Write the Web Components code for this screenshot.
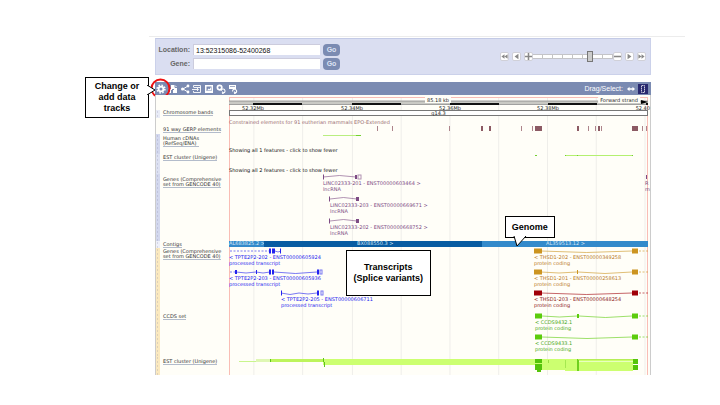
<!DOCTYPE html>
<html lang="en">
<head>
<meta charset="utf-8">
<title>Region in detail</title>
<style>
  body { margin: 0; background: #fff; color: #222; font-family: "Liberation Sans", Arial, sans-serif; }
</style>
</head>
<body>
<region-page></region-page>
<script>
class Base extends HTMLElement {
  constructor() { super(); this.attachShadow({ mode: 'open' }); }
  connectedCallback() { this.shadowRoot.innerHTML = this.render(); }
}
const SPAN = 419;
const pct = x => `${(x / SPAN * 100).toFixed(2)}%`;

/* Boxed note with an optional tail: "right" or "down" */
class CallOut extends Base {
  render() {
    const tail = {
      right: '<svg class="right" width="9" height="10"><path d="M0 0L8 5L0 10" fill="#fff" stroke="#000"/></svg>',
      down: '<svg class="down" width="14" height="11"><path d="M1 0L4 10L13 0" fill="#fff" stroke="#000"/></svg>'
    }[this.getAttribute('tail')] || '';
    return `<style>
      :host { position: absolute; display: flex; align-items: center; justify-content: center; box-sizing: border-box;
        background: #fff; border: 1px solid #000; color: #000; font: bold 9px/11px "Liberation Sans", Arial, sans-serif; text-align: center; z-index: 3; }
      svg { position: absolute; }
      .right { left: 100%; top: 7px; margin-left: -1px; }
      .down { left: 7px; top: 100%; margin-top: -1px; }
    </style><slot></slot>${tail}`;
  }
}
customElements.define('call-out', CallOut);

/* Location and gene search with zoom controls */
class LocationNav extends Base {
  render() {
    const btn = (label, d) => `<button class="step" aria-label="${label}"><svg viewBox="0 0 9 9"><path d="${d}"/></svg></button>`;
    return `<style>
      :host { display: flex; align-items: center; justify-content: space-between; box-sizing: border-box; height: 37px; padding: 0 4px 0 5px;
        background: #dadef1; border: 1px solid #cbd1ea; border-top-color: #c3cae6; }
      form { display: grid; grid-template-columns: 29px 127px 17px; column-gap: 3px; row-gap: 2px; align-items: center; }
      label { font: bold 7px/12px "Liberation Sans", Arial, sans-serif; color: #666; text-align: right; white-space: nowrap; justify-self: end; }
      input[type=text] { width: 100%; height: 11px; box-sizing: border-box; border: 1px solid #ccd; border-width: 1px 0 0 1px; padding: 0 2px; background: #fff; color: #111;
        font: 7px/10px "Liberation Sans", Arial, sans-serif; }
      .go { height: 12px; padding: 0; border: 0; border-radius: 4px; background: #7b8bb2; color: #dde3f4; font: bold 7px/12px "Liberation Sans", Arial, sans-serif; }
      .zoom { display: flex; align-items: center; }
      .step { width: 9px; height: 9px; padding: 0; border: 1px solid #d0d0d8; border-radius: 2px; background: #fff; display: block; }
      .step svg { display: block; width: 7px; height: 7px; }
      .step path { fill: #888; stroke: none; }
      .step + .step { margin-left: 3px; }
      input[type=range] { -webkit-appearance: none; appearance: none; width: 80px; height: 11px; margin: 0;
        background: linear-gradient(#c4c4c8,#c4c4c8) 0 3px/100% 1px no-repeat, linear-gradient(#c4c4c8,#c4c4c8) 0 7px/100% 1px no-repeat,
          repeating-linear-gradient(90deg,#fff 0 9px,#c4c4c4 9px 10px) 0 3px/100% 5px no-repeat; }
      input[type=range]::-webkit-slider-thumb { -webkit-appearance: none; width: 6px; height: 11px; background: #ccc; border: 1px solid #777; box-sizing: border-box; }
    </style>
    <form>
      <label for="loc">Location:</label><input id="loc" type="text" value="13:52315086-52400268"><button class="go" type="button">Go</button>
      <label for="gene">Gene:</label><input id="gene" type="text"><button class="go" type="button">Go</button>
    </form>
    <div class="zoom">
      ${btn('Far left', 'M4.5 1.5V7.5L.5 4.5ZM8.5 1.5V7.5L4.5 4.5Z')}${btn('Left', 'M7 1V8L2 4.5Z')}
      ${btn('Zoom in', 'M3.5 0H5.5V3.5H9V5.5H5.5V9H3.5V5.5H0V3.5H3.5Z')}
      <input type="range" aria-label="Zoom level" min="0" max="100" value="73">
      ${btn('Zoom out', 'M0 3.5H9V5.5H0Z')}${btn('Right', 'M2 1V8L7 4.5Z')}${btn('Far right', 'M.5 1.5V7.5L4.5 4.5ZM4.5 1.5V7.5L8.5 4.5Z')}
    </div>`;
  }
}
customElements.define('location-nav', LocationNav);

/* Icon strip above the image */
class ImageToolbar extends Base {
  render() {
    const icons = [
      ['Configure tracks', '<g fill="none" stroke="#fff"><circle cx="5" cy="5" r="2.4" stroke-width="1.8"/><circle cx="5" cy="5" r="3.9" stroke-width="1.5" stroke-dasharray="1.6 1.46"/></g>'],
      ['Add custom tracks', '<path fill="#fff" d="M3 1H7L9 3V9H5V6H3Z"/><path fill="#fff" d="M1 6H2V5H3V9H1Z"/><path stroke="#7b8bb2" d="M4 5.5H6M7 1V3.5H9" fill="none"/>'],
      ['Share', '<path d="M8 2L3 5L8 8" fill="none" stroke="#fff"/><circle cx="8" cy="2" r="1.4" fill="#fff"/><circle cx="2.6" cy="5" r="1.6" fill="#fff"/><circle cx="8" cy="8" r="1.4" fill="#fff"/>'],
      ['Resize image', '<path d="M1.5 3V1.5H8.5V8.5H1.5V7M1.5 3.5H8.5M0 5.5H6M5 4L6.5 5.5L5 7" fill="none" stroke="#fff" stroke-width=".9"/>'],
      ['Export image', '<path fill="#fff" d="M1 1H9V9H1Z"/><path d="M2.5 2.5H7.5V7H2.5Z" fill="#7b8bb2"/><path d="M3 6.5L4.6 4.5L5.6 5.3L7 3V6.5Z" fill="#fff"/>'],
      ['Reset configuration', '<circle cx="3.6" cy="3.6" r="2.2" fill="none" stroke="#fff" stroke-width="1.7"/><path d="M5 7A2 2 0 1 1 7.5 9M7.5 9L6 7.8M7.5 9L6.2 10" fill="none" stroke="#fff" stroke-width="1.1"/>'],
      ['Reset track order', '<path fill="#fff" d="M1 1H8V5H1Z"/><path d="M2 2.5H7" stroke="#7b8bb2" stroke-width=".7"/><path d="M4.6 7.5A2 2 0 1 1 7.5 9M7.5 9L6 7.8M7.5 9L6.2 10" fill="none" stroke="#fff" stroke-width="1.1"/>']
    ];
    return `<style>
      :host { display: flex; align-items: center; box-sizing: border-box; height: 13px; padding: 0 3px 0 1px; background: #7b8bb2; color: #fff; position: relative; }
      button { padding: 0; border: 0; background: none; width: 10px; height: 10px; margin-right: 2px; display: block; }
      button svg { display: block; width: 10px; height: 10px; }
      .drag { margin-left: auto; margin-right: 1px; font: 7px/13px "Liberation Sans", Arial, sans-serif; }
      .drag ~ button { margin: 0 0 0 2px; }
      .ring { position: absolute; left: -5px; top: -4px; }
    </style>
    ${icons.map(([n, s]) => `<button aria-label="${n}"><svg viewBox="0 0 10 10">${s}</svg></button>`).join('')}
    <span class="drag">Drag/Select:</span>
    <button aria-label="Drag"><svg viewBox="0 0 10 10"><path d="M1 5L3.5 2.8V4.2H6.5V2.8L9 5L6.5 7.2V5.8H3.5V7.2Z" fill="#fff"/></svg></button>
    <button aria-label="Select"><svg viewBox="0 0 10 10"><path d="M0 0H10V10H0Z" fill="#29296e"/><rect x="3.5" y="1.5" width="3" height="7" fill="none" stroke="#ccd" stroke-dasharray="1.5 .5"/></svg></button>
    <svg class="ring" width="22" height="22"><circle cx="10.5" cy="10.5" r="9" fill="none" stroke="#ed1111" stroke-width="2"/></svg>`;
  }
}
customElements.define('image-toolbar', ImageToolbar);

/* Track row: drag handle, linked name, data area */
class TrackRow extends Base {
  render() {
    const a = n => this.getAttribute(n);
    const name = (a('name') || '').split('|').filter(Boolean);
    return `<style>
      :host { display: grid; grid-template-columns: 4px 69px minmax(0, 1fr); min-height: ${a('height')}px; font: 5px/6px "DejaVu Sans", sans-serif; color: #222; }
      .handle { background: ${a('handle') || 'transparent'};
        background-image: radial-gradient(rgba(120,120,160,.22) 25%, transparent 30%); background-size: 3px 4px; }
      .handle.none { background: none; }
      .name { padding: ${a('offset') || 0}px 0 0 3px; }
      a { display: block; width: max-content; color: #333; text-decoration: none; line-height: 5px; white-space: nowrap; }
      a span { display: block; }
      a span:last-child { border-bottom: 1px solid #b3bccb; }
      .data { position: relative; }
    </style>
    <div class="handle ${a('handle') ? '' : 'none'}"></div>
    <div class="name">${name.length ? `<a href="#">${name.map(n => `<span>${n}</span>`).join('')}</a>` : ''}</div>
    <div class="data"><slot></slot></div>`;
  }
}
customElements.define('track-row', TrackRow);

/* Text pinned to a genomic position */
class FeatureLabel extends Base {
  render() {
    return `<style>
      :host { position: absolute; left: ${pct(+this.getAttribute('x'))}; white-space: nowrap; }
    </style><slot></slot>`;
  }
}
customElements.define('feature-label', FeatureLabel);

/* Gene model: exons "x:w:h", open boxes "x:w", introns "x1:x2:bend", dashed run "x1:x2".
   With the "over" attribute it shares the lane that it sits in. */
class GeneLane extends Base {
  render() {
    const list = n => (this.getAttribute(n) || '').split(' ').filter(Boolean).map(s => s.split(':').map(Number));
    const shapes = [
      ...list('introns').map(([p, q, b]) => `<polyline class="thin" points="${p},3 ${(p + q) / 2},${3 + b} ${q},3"/>`),
      ...list('dashes').map(([p, q]) => `<path class="thin" stroke-dasharray="2 1.5" d="M${p} 3H${q}"/>`),
      ...list('exons').map(([x, w, h]) => `<rect x="${x}" y="${3 - h / 2}" width="${w}" height="${h}" fill="currentColor"/>`),
      ...list('open').map(([x, w]) => `<rect class="thin" x="${x}" y="1" width="${w}" height="4"/>`)
    ].join('');
    return `<style>
      :host { display: block; position: relative; min-height: ${this.getAttribute('pitch') || 21}px; color: ${this.getAttribute('color')}; }
      :host([over]) { position: absolute; inset: 0; }
      svg { display: block; width: 100%; height: 6px; overflow: visible; }
      .thin { fill: none; stroke: currentColor; stroke-width: 1; opacity: .6; }
    </style><svg viewBox="0 0 ${SPAN} 6" preserveAspectRatio="none">${shapes}</svg><slot></slot>`;
  }
}
customElements.define('gene-lane', GeneLane);

/* Contig segments */
class ContigBar extends Base {
  render() {
    return `<style>
      :host { display: flex; height: 6px; color: #d4e6f5; font: 5px/5px "DejaVu Sans", sans-serif; }
      div { white-space: nowrap; min-width: 0; background: #338acb; }
      .a { flex: 35; } .b { flex: 218; background: #085ca2; padding-left: 93px; } .c { flex: 166; padding-left: 64px; }
      div { box-sizing: border-box; flex-basis: 0; }
      .a { flex: 0 0 ${pct(35)}; } .b { flex: 0 0 ${pct(218)}; } .c { flex: 0 0 ${pct(166)}; }
    </style><div class="a">AL683825.2 &gt;</div><div class="b">BX088550.3 &gt;</div><div class="c">AL359513.12 &gt;</div>`;
  }
}
customElements.define('contig-bar', ContigBar);

/* Scale bar with ticks every 10 kb */
class ScaleRuler extends Base {
  render() {
    const seg = [[24, 49], [123, 49], [221, 49], [319, 49], [417, 2]];
    const ticks = [[24, '52.32Mb'], [123, '52.34Mb'], [221, '52.36Mb'], [319, '52.38Mb']];
    return `<style>
      :host { display: block; position: relative; height: 15px; }
      svg { display: block; width: 100%; height: 15px; }
      span { position: absolute; top: 10px; transform: translateX(-50%); white-space: nowrap; line-height: 6px; }
      .last { right: -2px; transform: none; }
      .size, .strand { top: 2px; background: #fffef8; padding: 0 2px; }
      .arrow { position: absolute; right: 0; top: 5px; width: 7px; height: 4px; }
    </style>
    <svg viewBox="0 0 ${SPAN} 15" preserveAspectRatio="none">
      <rect y="6" width="419" height="3" fill="#c9c9c4"/><path d="M0 6H419M0 9.5H419" stroke="#888" stroke-width=".8"/>
      ${seg.map(([x, w]) => `<rect x="${x}" y="8" width="${w}" height="2" fill="#111"/>`).join('')}
    </svg>
    ${ticks.map(([x, t]) => `<span style="left:${pct(x)}">${t}</span>`).join('')}
    <span class="last">52.40</span>
    <span class="size" style="left:${pct(209)}">85.18 kb</span>
    <span class="strand" style="left:${pct(390)}">Forward strand</span>
    <svg class="arrow" viewBox="0 0 7 4"><path d="M0 0L7 2L0 4Z"/></svg>`;
  }
}
customElements.define('scale-ruler', ScaleRuler);

/* Small marks; shapes given as "x:y:w:h:color" */
class MarkStrip extends Base {
  render() {
    const h = this.getAttribute('height');
    return `<style>:host { display: block; } svg { display: block; width: 100%; height: ${h}px; }</style>
    <svg viewBox="0 0 ${SPAN} ${h}" preserveAspectRatio="none">${this.getAttribute('marks').trim().split(/\s+/).map(s => {
      const [x, y, w, t, c] = s.split(':');
      return `<rect x="${x}" y="${y}" width="${w}" height="${t}" fill="${c}"/>`;
    }).join('')}</svg>`;
  }
}
customElements.define('mark-strip', MarkStrip);

class GenomeImage extends Base {
  render() {
    const gerp = [[148,1],[163,1],[220,1],[252,2],[260,2],[292,1],[303,1],[306,7],[348,2],[359,1],[366,1],[369,2],[372,1],[403,6],[413,1],[417,1]]
      .map(([x, w]) => `${x}:0:${w}:5:${w > 1 ? '#8c5a64' : '#ad848b'}`).join(' ');
    const blue = '#2222ee', plum = '#7d4b84', gold = '#cc9420', goldText = '#b8791f', red = '#a00008', redText = '#8b1a1a', green = '#5ccc0c', greenText = '#48a820';
    const est = [
      '10:5:17:1:#c9f58d', '27:3:14:3:#dff7b4', '41:3:53:3:#bdf45c', '41:3:1:3:#5fc51c', '94:3:212:6:#ccff70', '94:2:1:4:#5fc51c', '95:6:1:5:#5fc51c',
      '306:3:30:6:#ccff70', '336:3:68:12:#ccff70', '313:9:23:5:#ccff70', '349:5:55:1:#e8ffc0', '306:3:7:4:#54c40a', '306:8:7:6:#54c40a', '308:14:4:2:#54c40a',
      '319:4:1:3:#9be040', '336:4:1:8:#a5e850', '348:3:2:12:#6ed020', '349:3:55:1:#b6ee58', '404:3:5:5:#54c40a', '404:9:5:5:#54c40a'
    ].join(' ');
    const lnc = (x, name, shape, extra = '') => `<gene-lane pitch="22" color="${plum}" ${shape}>
      <feature-label x="${x}">${name} &gt;<br>lncRNA</feature-label>${extra}</gene-lane>`;
    const thsd = (c, t, name, mid) => `<gene-lane over color="${c}" exons="305:8:5 403:6:5${mid ? ' 348:1:4' : ''}"
      introns="${mid ? '312:348:1 349:403:1.5' : '312:403:1.5'}" dashes="410:419"><feature-label x="305" style="color:${t}">&lt; ${name}<br>protein coding</feature-label></gene-lane>`;
    const tpte = (x, name, shape, over) => `<gene-lane color="${blue}" ${shape}>
      <feature-label x="${x}">&lt; ${name}<br>processed transcript</feature-label>${over}</gene-lane>`;
    const ccds = (name, shape) => `<gene-lane color="${green}" ${shape} dashes="410:419">
      <feature-label x="306" style="color:${greenText}">&lt; ${name}<br>protein coding</feature-label></gene-lane>`;
    return `<style>
      :host { display: block; position: relative; background: #fffef8; border: 1px solid #ccc; border-width: 0 1px; padding-right: 2px; }
      .tracks { position: relative; }
      .grid { position: absolute; left: 73px; right: 0; top: 2px; bottom: 0; border: 1px solid #f9bdb5; border-bottom: 0; }
      .grid svg { display: block; width: 100%; height: 100%; }
      .band { height: 4px; border: 1px solid #777; background: #fff; text-align: center; line-height: 4px; }
      .msg { white-space: nowrap; color: #111; }
      .cons { color: #9a6c72; line-height: 7px; padding-top: 1px; }
      .genome { left: 70.6%; top: 121px; width: 50px; height: 22px; }
      .variants { left: 38.4%; top: 155px; width: 85px; height: 46px; }
    </style>
    <div class="tracks">
      <div class="grid"><svg viewBox="0 0 419 10" preserveAspectRatio="none"><path d="M24 0V10M73 0V10M123 0V10M172 0V10M221 0V10M270 0V10M319 0V10M368 0V10M417 0V10" stroke="#efeeea"/></svg></div>
      <track-row height="15"><scale-ruler></scale-ruler></track-row>
      <track-row height="8" name="Chromosome bands" handle="#e9ecf7"><div class="band">q14.3</div></track-row>
      <track-row height="16" name="91 way GERP elements" offset="9">
        <div class="cons">Constrained elements for 91 eutherian mammals EPO-Extended</div>
        <mark-strip height="5" marks="${gerp}"></mark-strip></track-row>
      <track-row height="20" name="Human cDNAs|(RefSeq/ENA)" offset="2" handle="#d3d8ee">
        <mark-strip height="13" marks="94:1:38:1:#b9ee80 127:1:5:1:#72d030"></mark-strip>
        <div class="msg">Showing all 1 features - click to show fewer</div></track-row>
      <track-row height="20" name="EST cluster (Unigene)" offset="1" handle="#dde1f2">
        <mark-strip height="13" marks="306:1:2:1:#72d030 336:1:68:1:#b4f070 336:1:1:1:#72d030 348:1:1:1:#72d030 403:1:1:1:#72d030"></mark-strip>
        <div class="msg">Showing all 2 features - click to show fewer</div></track-row>
      <track-row height="67" name="Genes (Comprehensive|set from GENCODE 40)" offset="3" handle="#d3d8ee">
        ${lnc(94, 'LINC02333-201 - ENST00000603464', 'exons="94:1:5 126:2:4 417:1:4" open="129:3" introns="94:127:-1.5"', '<feature-label x="416">R<br>m</feature-label>')}
        ${lnc(101, 'LINC02333-203 - ENST00000669671', 'exons="100:1:5 127:3:4" introns="101:128:-1.5"')}
        ${lnc(101, 'LINC02333-202 - ENST00000668752', 'exons="100:1:5 127:3:4" introns="101:128:-1.5"')}</track-row>
      <track-row height="7" name="Contigs" offset="1" handle="#eef0fa"><contig-bar></contig-bar></track-row>
      <track-row height="65" name="Genes (Comprehensive|set from GENCODE 40)" offset="1" handle="#fbe9bf">
        ${tpte(0, 'TPTE2P2-202 - ENST00000605924', 'exons="40:2:5 43:3:5 51:1:5" introns="46:52:1" dashes="1:40"', thsd(gold, goldText, 'THSD1-202 - ENST00000349258', false))}
        ${tpte(0, 'TPTE2P2-203 - ENST00000605936', 'exons="6:2:4 27:1:4 40:2:5 43:2:5 88:2:5" open="91:2" introns="7:27:1 27:41:1 45:88:1.5" dashes="1:6"', thsd(gold, goldText, 'THSD1-201 - ENST00000258613', true))}
        ${tpte(52, 'TPTE2P2-205 - ENST00000606711', 'exons="52:1:5 88:2:5" open="92:2" introns="52:70:1.5 70:88:1"', thsd(red, redText, 'THSD1-203 - ENST00000648254', false))}</track-row>
      <track-row height="43" name="CCDS set" offset="1" handle="#fbe9bf">
        ${ccds('CCDS9432.1', 'exons="306:7:5 348:2:4 403:6:5" introns="313:348:1 350:403:1.5"')}
        ${ccds('CCDS9433.1', 'exons="306:7:5 403:6:5" introns="313:403:1.5"')}</track-row>
      <track-row height="19" name="EST cluster (Unigene)" offset="3" handle="#fbe9bf"><mark-strip height="18" marks="${est}"></mark-strip></track-row>
    </div>
    <call-out class="genome" tail="down">Genome</call-out>
    <call-out class="variants">Transcripts<br>(Splice variants)</call-out>`;
  }
}
customElements.define('genome-image', GenomeImage);

class RegionPage extends Base {
  render() {
    return `<style>
      :host { display: block; position: relative; padding-top: 36px; }
      hr { margin: 0 35px 1px 149px; border: 0; border-top: 1px solid #ececec; }
      main { display: grid; margin: 0 69px 30px 155px; }
      location-nav { margin-bottom: 7px; }
      call-out { left: 85px; top: 77px; width: 64px; height: 41px; }
    </style>
    <hr>
    <main><location-nav></location-nav><image-toolbar></image-toolbar><genome-image></genome-image></main>
    <call-out tail="right">Change or<br>add data<br>tracks</call-out>`;
  }
}
customElements.define('region-page', RegionPage);
</script>
</body>
</html>
